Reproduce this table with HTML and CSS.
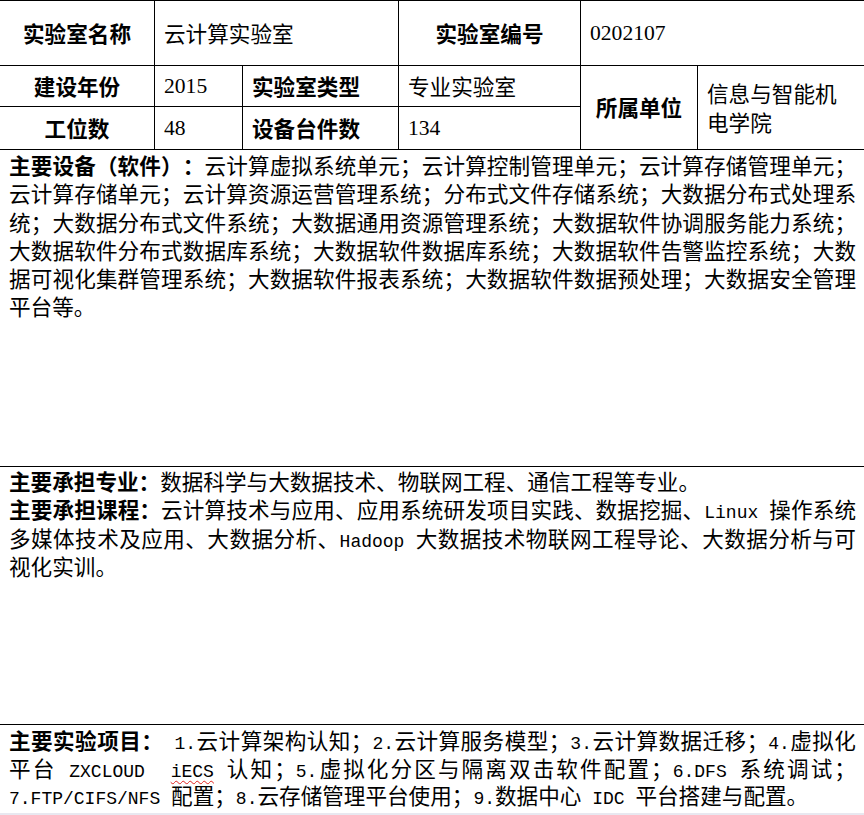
FILE: index.html
```html
<!DOCTYPE html>
<html lang="zh-CN">
<head>
  <meta charset="UTF-8">
  <title>云计算实验室</title>
  <meta name="viewport" content="width=device-width, initial-scale=1.0">
  <link rel="stylesheet" href="styles.css">
</head>
<body>
  <div class="sheet">
    <div class="cell head">实验室名称</div>
    <div class="cell val wide">云计算实验室</div>
    <div class="cell head">实验室编号</div>
    <div class="cell val wide"><span class="num">0202107</span></div>

    <div class="cell head">建设年份</div>
    <div class="cell val"><span class="num">2015</span></div>
    <div class="cell head left">实验室类型</div>
    <div class="cell val">专业实验室</div>
    <div class="cell head tall">所属单位</div>
    <div class="cell val tall">信息与智能机电学院</div>

    <div class="cell head">工位数</div>
    <div class="cell val"><span class="num">48</span></div>
    <div class="cell head left">设备台件数</div>
    <div class="cell val"><span class="num">134</span></div>

    <div class="cell block first">
      <p><b>主要设备（软件）：</b>云计算虚拟系统单元；云计算控制管理单元；云计算存储管理单元；云计算存储单元；云计算资源运营管理系统；分布式文件存储系统；大数据分布式处理系统；大数据分布式文件系统；大数据通用资源管理系统；大数据软件协调服务能力系统；大数据软件分布式数据库系统；大数据软件数据库系统；大数据软件告警监控系统；大数据可视化集群管理系统；大数据软件报表系统；大数据软件数据预处理；大数据安全管理平台等。</p>
    </div>

    <div class="cell block">
      <p><b>主要承担专业：</b>数据科学与大数据技术、物联网工程、通信工程等专业。</p>
      <p><b>主要承担课程：</b>云计算技术与应用、应用系统研发项目实践、数据挖掘、<span class="en">Linux </span>操作系统多媒体技术及应用、大数据分析、<span class="en">Hadoop </span>大数据技术物联网工程导论、大数据分析与可视化实训。</p>
    </div>

    <div class="cell block last">
      <p><b>主要实验项目：</b><span class="en"> 1.</span>云计算架构认知；<span class="en">2.</span>云计算服务模型；<span class="en">3.</span>云计算数据迁移；<span class="en">4.</span>虚拟化平台<span class="en"> ZXCLOUD&nbsp; <span class="typo">iECS</span> </span>认知；<span class="en">5.</span>虚拟化分区与隔离双击软件配置；<span class="en">6.DFS </span>系统调试；<span class="en">7.FTP/CIFS/NFS </span>配置；<span class="en">8.</span>云存储管理平台使用；<span class="en">9.</span>数据中心<span class="en"> IDC </span>平台搭建与配置。</p>
    </div>
  </div>
</body>
</html>
```

FILE: styles.css
```css
* {
  box-sizing: border-box;
}

html {
  background: #e8e8f0;
}

body {
  margin: 0;
  font-family: "Noto Sans CJK SC", sans-serif;
  font-size: 21.6px;
  line-height: 28.3px;
  color: #000;
  text-spacing-trim: space-all;
  overflow: hidden;
}

/* table drawn as a grid: black background shows through the 1px gaps */
.sheet {
  display: grid;
  grid-template-columns: 154px 87px 155px 181px 116px 166px;
  grid-template-rows: 64px 40px 42px 316px 257px 88px;
  gap: 1px;
  width: 864px;
  background: #000;
  border-top: 1px solid #000;
}

.cell {
  background: #fff;
  display: flex;
  align-items: center;
  padding: 0 9px;
}

.head {
  justify-content: center;
  font-weight: bold;
}

.head.left {
  justify-content: flex-start;
}

.wide {
  grid-column: span 2;
}

.tall {
  grid-row: span 2;
}

.num {
  font-family: "Liberation Serif", serif;
}

.block {
  display: block;
  grid-column: 1 / -1;
  padding: 0 8px 0 9px;
  text-align: justify;
}

.block.first {
  padding-top: 1px;
}

.block.last {
  padding-top: 1px;
  line-height: 27.6px;
}

.block p {
  margin: 0;
}

.en {
  font-family: "Liberation Mono", monospace;
  font-size: 18px;
  line-height: 1;
}

.typo {
  text-decoration: underline wavy #e0201c;
  text-decoration-thickness: 1px;
  text-underline-offset: 3px;
}
```
